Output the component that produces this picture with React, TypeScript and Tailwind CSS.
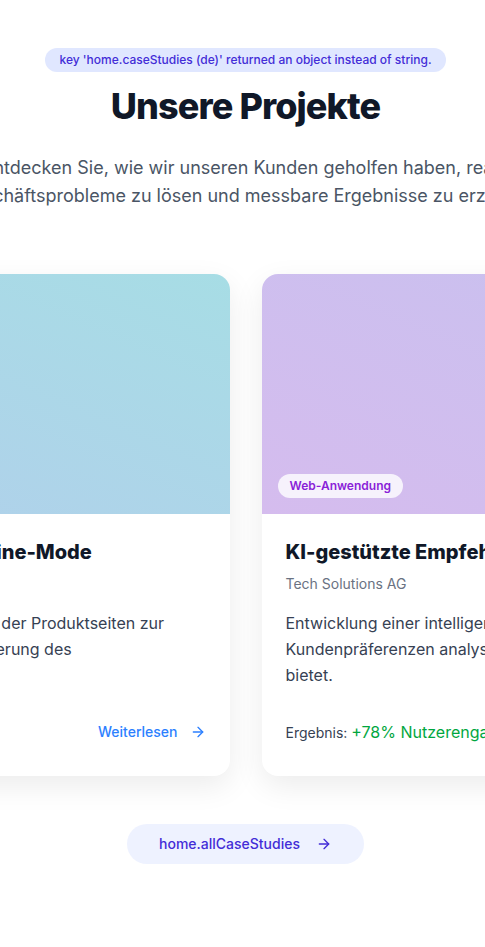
import React from "react";
import { ArrowRight } from "lucide-react";

type CaseStudy = {
  title: string;
  client: string;
  category: string;
  description: string;
  result: string;
  gradient: string;
};

const caseStudies: CaseStudy[] = [
  {
    title: "E-Commerce-Plattform für Online-Mode",
    client: "Fashion House GmbH",
    category: "E-Commerce",
    description:
      "Relaunch des Webshops mit Anpassung der Produktseiten zur Steigerung der Conversion und Verbesserung des Einkaufserlebnisses.",
    result: "+45% Conversion-Rate",
    gradient: "from-[#b2ceec] to-[#a7dde5]",
  },
  {
    title: "KI-gestützte Empfehlungsengine",
    client: "Tech Solutions AG",
    category: "Web-Anwendung",
    description:
      "Entwicklung einer intelligenten Empfehlungsengine, die Kundenpräferenzen analysiert und personalisierte Vorschläge bietet.",
    result: "+78% Nutzerengagement",
    gradient: "from-[#d5bcee] to-[#c7c1ef]",
  },
];

const CaseCard = ({ item }: { item: CaseStudy }) => (
  <div className="flex flex-col overflow-hidden rounded-2xl bg-white shadow-[0_10px_30px_rgba(0,0,0,0.08)]">
    <div className={`relative h-60 bg-linear-to-tr ${item.gradient}`}>
      <span className="absolute bottom-4 left-4 rounded-full bg-white/80 px-3 py-1 text-xs font-semibold text-[#8a1fd8]">
        {item.category}
      </span>
    </div>
    <div className="flex flex-1 flex-col px-6 pt-6 pb-8">
      <h3 className="text-xl leading-7 font-extrabold text-gray-900">{item.title}</h3>
      <p className="mt-2 text-sm text-gray-500">{item.client}</p>
      <p className="mt-4 mb-8 text-base leading-[26px] text-gray-700">{item.description}</p>
      <div className="mt-auto flex items-center justify-between">
        <p className="text-sm text-gray-700">
          Ergebnis: <span className="text-base text-green-600">{item.result}</span>
        </p>
        <a href="#" className="flex items-center gap-3 text-sm font-medium text-blue-500">
          Weiterlesen
          <ArrowRight size={16} />
        </a>
      </div>
    </div>
  </div>
);

export default function App() {
  return (
    <div className="min-h-screen w-full overflow-hidden bg-white font-['Inter',sans-serif]">
      <section className="flex flex-col items-center pt-12 pb-20 pl-1.5">
        <span className="rounded-full bg-indigo-100 px-3.5 py-1 text-xs font-medium text-indigo-700">
          key 'home.caseStudies (de)' returned an object instead of string.
        </span>
        <h2 className="mt-[14px] text-4xl leading-10 font-extrabold tracking-tight text-gray-900">Unsere Projekte</h2>
        <div className="mt-7 flex w-full justify-center">
          <p className="w-[600px] shrink-0 text-center text-lg leading-7 text-gray-600">
            Entdecken Sie, wie wir unseren Kunden geholfen haben, reale Geschäftsprobleme zu lösen und messbare
            Ergebnisse zu erzielen.
          </p>
        </div>
        <div className="mt-16 flex w-full justify-center">
          <div className="grid w-[1152px] shrink-0 grid-cols-2 gap-8">
            {caseStudies.map((item) => (
              <CaseCard key={item.title} item={item} />
            ))}
          </div>
        </div>
        <a
          href="#"
          className="mt-12 flex items-center gap-4 rounded-full bg-indigo-50 px-8 py-2.5 text-sm font-medium text-indigo-700"
        >
          home.allCaseStudies
          <ArrowRight size={16} />
        </a>
      </section>
    </div>
  );
}
